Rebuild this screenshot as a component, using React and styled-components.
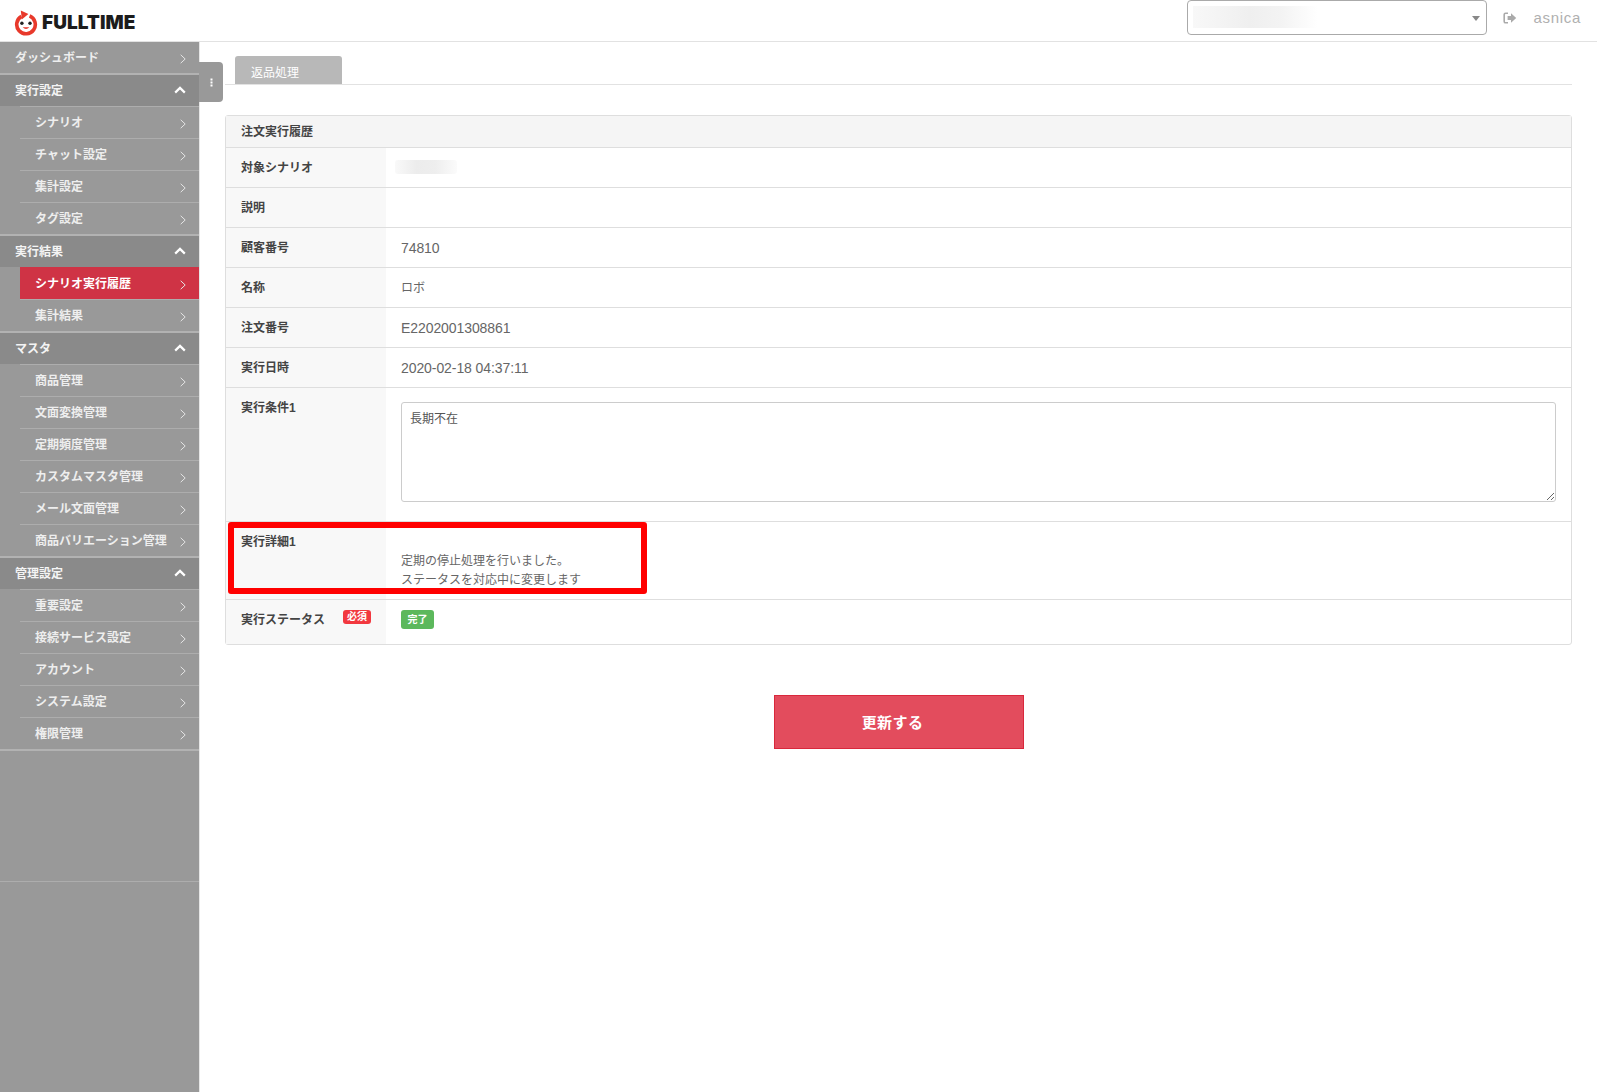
import React from 'react'
import styled, { createGlobalStyle } from 'styled-components'

const GlobalStyle = createGlobalStyle`
  html, body {
    margin: 0;
    padding: 0;
    background: #fff;
    font-family: 'Liberation Sans', 'Noto Sans CJK JP', sans-serif;
    color: #555;
  }
  * {
    box-sizing: border-box;
  }
`

const menu = [
  { title: 'ダッシュボード', single: true },
  { title: '実行設定', items: ['シナリオ', 'チャット設定', '集計設定', 'タグ設定'] },
  { title: '実行結果', items: ['シナリオ実行履歴', '集計結果'], active: 'シナリオ実行履歴' },
  { title: 'マスタ', items: ['商品管理', '文面変換管理', '定期頻度管理', 'カスタムマスタ管理', 'メール文面管理', '商品バリエーション管理'] },
  { title: '管理設定', items: ['重要設定', '接続サービス設定', 'アカウント', 'システム設定', '権限管理'] }
]

const rows = [
  { label: '対象シナリオ', blur: true },
  { label: '説明', value: '' },
  { label: '顧客番号', value: '74810' },
  { label: '名称', value: 'ロボ', small: true },
  { label: '注文番号', value: 'E2202001308861' },
  { label: '実行日時', value: '2020-02-18 04:37:11' }
]

function Chevron () {
  return (
    <ChevronIcon width='6' height='10' viewBox='0 0 6 10'>
      <path d='M0.7 0.8 L5.2 5 L0.7 9.2' fill='none' stroke='#e4e4e4' strokeWidth='1' />
    </ChevronIcon>
  )
}

function ChevronUp () {
  return (
    <svg width='12' height='8' viewBox='0 0 12 8'>
      <path d='M1.2 6.6 L6 1.9 L10.8 6.6' fill='none' stroke='#fff' strokeWidth='2.2' />
    </svg>
  )
}

function LogoMark () {
  return (
    <svg width='24' height='26' viewBox='0 0 24 26'>
      <path d='M7.4 6.4 A9.3 9.3 0 1 0 15.6 5.9' fill='none' stroke='#e8392b' strokeWidth='3.6' />
      <path d='M6.8 0.6 L14.4 4 L7.8 9.4 Z' fill='#e8392b' />
      <circle cx='7.9' cy='13.3' r='1.7' fill='#222' />
      <circle cx='16' cy='13.3' r='1.7' fill='#222' />
      <path d='M8.6 17.2 Q12 20.8 15.4 17.2 Z' fill='#e8392b' />
    </svg>
  )
}

function LogoutIcon () {
  return (
    <svg width='14' height='12' viewBox='0 0 14 12'>
      <path d='M5 1.2 H2.6 Q1.2 1.2 1.2 2.6 V9.4 Q1.2 10.8 2.6 10.8 H5' fill='none' stroke='#aaa' strokeWidth='1.6' />
      <path d='M4.6 4 H8 V1.2 L13.2 6 L8 10.8 V8 H4.6 Z' fill='#aaa' />
    </svg>
  )
}

function App () {
  return (
    <Page>
      <GlobalStyle />
      <Header>
        <Logo>
          <LogoMark />
          <LogoText>FULLTIME</LogoText>
        </Logo>
        <HeaderRight>
          <ShopSelect>
            <BlurredName />
            <Caret />
          </ShopSelect>
          <LogoutIcon />
          <UserName>asnica</UserName>
        </HeaderRight>
      </Header>
      <Body>
        <Sidebar>
          {menu.map(section => (
            <section key={section.title}>
              <SectionRow $single={section.single}>
                <MenuText>{section.title}</MenuText>
                {section.single ? <Chevron /> : <ChevronUp />}
              </SectionRow>
              {section.items && section.items.map(item => (
                <ChildRow key={item} $active={item === section.active}>
                  <MenuText>{item}</MenuText>
                  <Chevron />
                </ChildRow>
              ))}
              <SectionEnd />
            </section>
          ))}
          <SidebarLine />
          <SidebarToggle>
            <svg width='3' height='9' viewBox='0 0 3 9'>
              <rect x='0.5' y='0.5' width='2' height='2' fill='#fff' />
              <rect x='0.5' y='3.5' width='2' height='2' fill='#fff' />
              <rect x='0.5' y='6.5' width='2' height='2' fill='#fff' />
            </svg>
          </SidebarToggle>
        </Sidebar>
        <Main>
          <TabBar>
            <Tab>返品処理</Tab>
          </TabBar>
          <Panel>
            <PanelTitle>注文実行履歴</PanelTitle>
            {rows.map(row => (
              <Row key={row.label}>
                <Label>{row.label}</Label>
                <Value $small={row.small}>{row.blur ? <BlurredCell /> : row.value}</Value>
              </Row>
            ))}
            <Row>
              <Label>実行条件1</Label>
              <MemoCell>
                <Memo readOnly defaultValue='長期不在' />
              </MemoCell>
            </Row>
            <Row>
              <Label>実行詳細1</Label>
              <DetailValue>
                定期の停止処理を行いました。<br />
                ステータスを対応中に変更します
              </DetailValue>
            </Row>
            <Row>
              <StatusLabel>
                実行ステータス
                <RequiredBadge>必須</RequiredBadge>
              </StatusLabel>
              <StatusValue>
                <DoneBadge>完了</DoneBadge>
              </StatusValue>
            </Row>
            <Highlight />
          </Panel>
          <Actions>
            <SubmitButton type='button'>更新する</SubmitButton>
          </Actions>
        </Main>
      </Body>
    </Page>
  )
}

const Page = styled.div`
  width: 1597px;
  height: 1092px;
  overflow: hidden;
  display: flex;
  flex-direction: column;
`

const Header = styled.header`
  height: 42px;
  flex: none;
  display: flex;
  align-items: flex-start;
  justify-content: space-between;
  border-bottom: 1px solid #e2e2e2;
`

const Logo = styled.div`
  display: flex;
  align-items: center;
  gap: 4px;
  padding: 10px 0 0 14px;
`

const LogoText = styled.span`
  font-family: 'Inter', sans-serif;
  font-weight: 900;
  font-size: 19px;
  line-height: 26px;
  letter-spacing: 0.05px;
  color: #1c1c1c;
`

const HeaderRight = styled.div`
  display: flex;
  align-items: center;
  height: 35px;
  padding-right: 16px;
`

const ShopSelect = styled.div`
  position: relative;
  width: 300px;
  height: 35px;
  margin-right: 16px;
  padding: 5px;
  border: 1px solid #aaa;
  border-radius: 4px;
`

const BlurredName = styled.div`
  width: 125px;
  height: 22px;
  background: linear-gradient(90deg, #f8f8f8, #efefef 45%, #f3f3f3 70%, #fff);
`

const Caret = styled.div`
  position: absolute;
  top: 15px;
  right: 6px;
  border-style: solid;
  border-width: 5px 4px 0;
  border-color: #888 transparent transparent;
`

const UserName = styled.span`
  margin-left: 16px;
  font-size: 15px;
  letter-spacing: 0.7px;
  color: #b0b0b0;
`

const Body = styled.div`
  flex: 1;
  display: flex;
  min-height: 0;
`

const Sidebar = styled.aside`
  position: relative;
  width: 200px;
  flex: none;
  background: #999;
  border-right: 1px solid #e6e6e6;
  color: #fff;
  font-size: 12px;
  font-weight: 700;
`

const SectionRow = styled.div`
  height: 31px;
  display: flex;
  align-items: center;
  justify-content: space-between;
  padding: 0 ${p => (p.$single ? '13px' : '13px')} ${p => (p.$single ? '0' : '2px')} 15px;
  background: ${p => (p.$single ? '#999' : '#8a8a8a')};
  color: ${p => (p.$single ? '#eee' : '#f4f4f4')};

  span {
    margin-bottom: ${p => (p.$single ? '2px' : '0')};
  }
`

const ChildRow = styled.div`
  height: 32px;
  margin-left: 20px;
  display: flex;
  align-items: center;
  justify-content: space-between;
  padding: 1px 13px 0 15px;
  border-top: 1px solid ${p => (p.$active ? '#cf3345' : '#adadad')};
  background: ${p => (p.$active ? '#cf3345' : 'transparent')};
  color: ${p => (p.$active ? '#fff' : '#eee')};

  span {
    margin-bottom: 4px;
  }
`

const MenuText = styled.span`
  white-space: nowrap;
`

const ChevronIcon = styled.svg`
  flex: none;
  margin-top: 2px;
`

const SectionEnd = styled.div`
  height: 2px;
  background: #b2b2b2;
`

const SidebarLine = styled.div`
  height: 1px;
  margin-top: 130px;
  background: #adadad;
`

const SidebarToggle = styled.div`
  position: absolute;
  top: 20px;
  left: 199px;
  width: 24px;
  height: 40px;
  display: flex;
  align-items: center;
  justify-content: center;
  background: #999;
  border-radius: 0 4px 4px 0;
`

const Main = styled.main`
  flex: 1;
  padding: 14px 25px 0 25px;
  min-width: 0;
`

const TabBar = styled.div`
  height: 29px;
  padding-left: 10px;
  border-bottom: 1px solid #e2e2e2;
`

const Tab = styled.div`
  width: 107px;
  height: 28px;
  padding: 8px 0 0 16px;
  background: #b8b8b8;
  border-radius: 3px 3px 0 0;
  font-size: 12px;
  line-height: 18px;
  color: #fff;
`

const Panel = styled.div`
  position: relative;
  margin-top: 30px;
  border: 1px solid #dedede;
  border-radius: 3px;
  font-size: 12px;
`

const PanelTitle = styled.div`
  height: 31px;
  padding: 0 0 2px 15px;
  display: flex;
  align-items: center;
  background: #f5f5f5;
  font-weight: 700;
  color: #444;
`

const Row = styled.div`
  display: grid;
  grid-template-columns: 160px 1fr;
  border-top: 1px solid #dedede;
`

const Label = styled.div`
  min-height: 39px;
  padding: 11px 15px 0;
  background: #f8f8f8;
  font-weight: 700;
  line-height: 18px;
  color: #444;
`

const Value = styled.div`
  padding: 11px 15px 0;
  font-size: ${p => (p.$small ? '12px' : '14px')};
  line-height: 18px;
  letter-spacing: ${p => (p.$small ? '0' : '-0.08px')};
  color: #666;
`

const MemoCell = styled.div`
  padding: 14px 15px 19px;
`

const BlurredCell = styled.div`
  width: 62px;
  height: 14px;
  margin: 1px 0 0 -6px;
  background: linear-gradient(90deg, #f9f9f9, #ececec 35%, #eeeeee 65%, #fbfbfb);
  border-radius: 3px;
`

const Memo = styled.textarea`
  display: block;
  width: 100%;
  height: 100px;
  padding: 7px 8px;
  border: 1px solid #ccc;
  border-radius: 3px;
  outline: none;
  font-family: inherit;
  font-size: 12px;
  line-height: 18px;
  color: #555;
`

const DetailValue = styled.div`
  height: 77px;
  padding: 30px 15px 0;
  font-size: 12px;
  line-height: 19px;
  color: #666;
`

const StatusLabel = styled(Label)`
  display: flex;
  align-items: flex-start;
  justify-content: space-between;
  height: 44px;
  padding: 11px 15px 0;
`

const RequiredBadge = styled.span`
  width: 28px;
  height: 14px;
  margin-top: -1px;
  background: #f2383f;
  border-radius: 3px;
  font-size: 10px;
  line-height: 14px;
  text-align: center;
  color: #fff;
`

const StatusValue = styled.div`
  padding: 10px 15px 0;
`

const DoneBadge = styled.span`
  display: block;
  width: 33px;
  height: 19px;
  background: #5cb85c;
  border-radius: 3px;
  font-size: 10px;
  font-weight: 700;
  line-height: 19px;
  text-align: center;
  color: #fff;
`

const Highlight = styled.div`
  position: absolute;
  top: 406px;
  left: 2px;
  width: 419px;
  height: 72px;
  border: 6px solid #ff0000;
  border-radius: 3px;
  pointer-events: none;
`

const Actions = styled.div`
  display: flex;
  justify-content: center;
  margin-top: 50px;
`

const SubmitButton = styled.button`
  width: 250px;
  height: 54px;
  padding: 0 12px 2px 0;
  background: #e34c5d;
  border: 1px solid #d9283c;
  border-radius: 0;
  font-family: inherit;
  font-size: 15px;
  font-weight: 700;
  letter-spacing: 0.4px;
  color: #fff;
`

export default App
